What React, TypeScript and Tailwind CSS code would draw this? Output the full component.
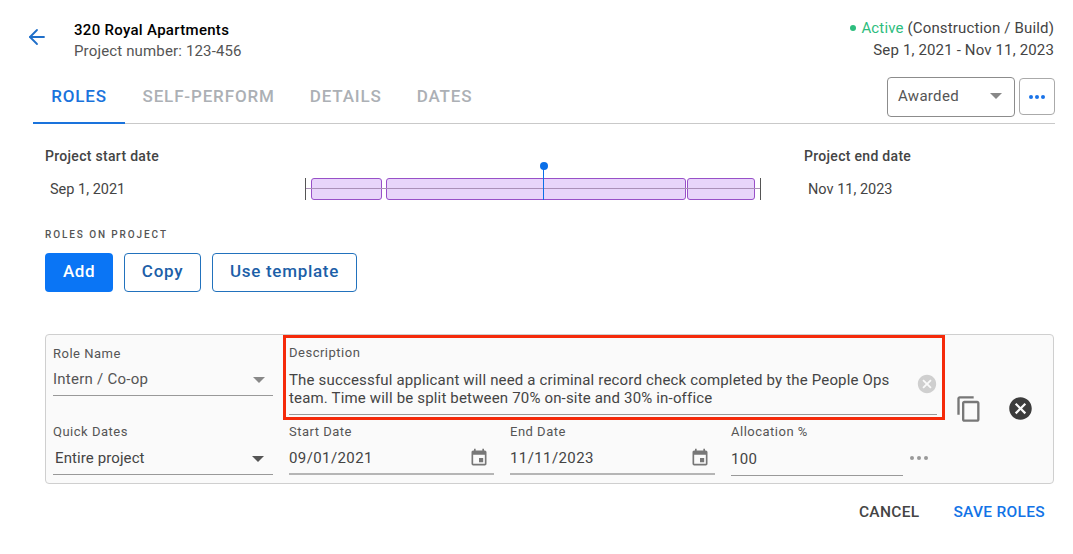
import { ArrowLeft } from 'lucide-react';
import { MdCancel, MdContentCopy, MdEvent } from 'react-icons/md';

function Caret({ className }: { className: string }) {
  return (
    <svg width="12" height="6" viewBox="0 0 14 7" className={className}>
      <path d="M0 0h14L7 7z" fill="currentColor" />
    </svg>
  );
}

function Label({ children }: { children: string }) {
  return <div className="text-[13px] leading-[16px] tracking-[0.5px] text-[#555]">{children}</div>;
}

function DateField({ label, value, width }: { label: string; value: string; width: string }) {
  return (
    <div className={width}>
      <Label>{label}</Label>
      <div className="mt-[8px] h-[27px] border-b-2 border-[#b5b5b5] flex items-start justify-between pr-[5px]">
        <span className="text-[15px] leading-[20px] tracking-[0.4px] text-[#444]">{value}</span>
        <MdEvent className="w-[20px] h-[20px] text-[#777]" />
      </div>
    </div>
  );
}

export default function App() {
  const tabs = ['SELF-PERFORM', 'DETAILS', 'DATES'];

  return (
    <div className="w-[1073px] h-[554px] bg-white overflow-hidden font-['Roboto',sans-serif] text-[#444]">
      {/* Header */}
      <div className="h-[78px] pl-[25px] pr-[19px] pt-[20px] flex justify-between">
        <div className="flex">
          <ArrowLeft className="w-[24px] h-[24px] mt-[5px] text-[#1f6fc9]" strokeWidth={1.8} />
          <div className="ml-[25px]">
            <div className="text-[15px] leading-[20px] font-medium tracking-[0.3px] text-black">320 Royal Apartments</div>
            <div className="mt-[1px] text-[15px] leading-[20px] tracking-[0.15px] text-[#555]">Project number: 123-456</div>
          </div>
        </div>
        <div className="text-right text-[15px] leading-[22px] tracking-[0.15px] text-[#444]">
          <div className="-mt-[3px]">
            <span className="inline-block w-[6px] h-[6px] rounded-full bg-[#2dbd7e] mr-[5px] mb-[2px]" />
            <span className="text-[#2dbd7e]">Active</span> (Construction / Build)
          </div>
          <div>Sep 1, 2021 - Nov 11, 2023</div>
        </div>
      </div>

      {/* Tabs */}
      <div className="ml-[33px] mr-[18px] h-[46px] border-b border-[#c9c9c9] flex justify-between">
        <div className="flex">
          <div className="h-[46px] w-[92px] border-b-2 border-[#1a73dc] pt-[8px] text-center text-[17px] leading-[20px] font-medium tracking-[0.85px] text-[#1a73dc]">
            ROLES
          </div>
          {tabs.map((tab) => (
            <div key={tab} className="h-[45px] px-[17.5px] first-of-type:pl-[18px] pt-[8px] text-[17px] leading-[20px] font-medium tracking-[0.85px] text-[#acb0b5]">
              {tab}
            </div>
          ))}
        </div>
        <div className="flex gap-[4px] -mt-[1px]">
          <div className="w-[128px] h-[40px] border border-[#8c8c8c] rounded-[4px] pl-[10px] pr-[12px] pb-[2px] flex items-center justify-between text-[15px] tracking-[0.3px] text-[#555]">
            Awarded
            <Caret className="text-[#888]" />
          </div>
          <div className="w-[36px] h-[37px] mt-[1px] border border-[#aaa] rounded-[4px] flex items-center justify-center gap-[2px]">
            <span className="w-[4px] h-[4px] rounded-full bg-[#1a73e8]" />
            <span className="w-[4px] h-[4px] rounded-full bg-[#1a73e8]" />
            <span className="w-[4px] h-[4px] rounded-full bg-[#1a73e8]" />
          </div>
        </div>
      </div>

      {/* Timeline */}
      <div className="ml-[45px] mt-[23px] h-[54px] flex">
        <div className="w-[260px]">
          <div className="text-[14px] leading-[18px] font-medium tracking-[0.3px] text-[#444]">Project start date</div>
          <div className="mt-[16px] ml-[5px] text-[14.5px] leading-[18px] text-[#444]">Sep 1, 2021</div>
        </div>
        <div className="relative w-[456px] h-[54px]">
          <div className="mt-[31px] h-[22px] flex items-stretch">
            <div className="w-px bg-[#555]" />
            <div className="ml-[5px] w-[71px] bg-[#e8d5fa] border border-[#9850c8] rounded-[3px]" />
            <div className="ml-[4px] w-[300px] bg-[#e8d5fa] border border-[#9850c8] rounded-[3px]" />
            <div className="ml-[1px] w-[68px] bg-[#e8d5fa] border border-[#9850c8] rounded-[3px]" />
            <div className="ml-[5px] w-px bg-[#555]" />
          </div>
          <div className="absolute left-[1px] top-[41px] w-[454px] h-px bg-[#aa90b8]" />
          <div className="absolute left-[238px] top-[16px] w-px h-[37px] bg-[#0a6fe8]" />
          <div className="absolute left-[235px] top-[15px] w-[8px] h-[8px] rounded-full bg-[#0a6fe8]" />
        </div>
        <div className="ml-[43px]">
          <div className="text-[14px] leading-[18px] font-medium tracking-[0.3px] text-[#444]">Project end date</div>
          <div className="mt-[16px] ml-[4px] text-[14.5px] leading-[18px] text-[#444]">Nov 11, 2023</div>
        </div>
      </div>

      {/* Roles on project */}
      <div className="ml-[45px] mt-[27px] text-[10px] leading-[14px] font-medium tracking-[1.9px] text-[#555]">ROLES ON PROJECT</div>
      <div className="ml-[45px] mt-[11px] flex gap-[11px]">
        <button className="w-[68px] h-[39px] pb-[2px] rounded-[4px] bg-[#0a75f5] text-[17px] font-medium tracking-[0.5px] text-white">Add</button>
        <button className="w-[77px] h-[39px] pb-[2px] rounded-[4px] border border-[#2272bd] bg-white text-[17px] tracking-[0.7px] font-medium text-[#1d5fa8]">Copy</button>
        <button className="w-[145px] h-[39px] pb-[2px] rounded-[4px] border border-[#2272bd] bg-white text-[17px] tracking-[0.7px] font-medium text-[#1d5fa8]">Use template</button>
      </div>

      {/* Role card */}
      <div className="ml-[45px] mt-[42px] w-[1009px] h-[150px] border border-[#cfcfcf] rounded-[4px] bg-[#fafafa]">
        <div className="flex pl-[7px]">
          <div className="w-[220px] shrink-0 pt-[11px]">
            <Label>Role Name</Label>
            <div className="mt-[7px] h-[27px] border-b border-[#999] flex items-start justify-between pr-[8px]">
              <span className="text-[15px] leading-[20px] tracking-[0.25px] text-[#555]">Intern / Co-op</span>
              <Caret className="mt-[8px] text-[#888]" />
            </div>
          </div>
          <div className="ml-[10px] w-[662px] shrink-0 h-[85px] border-[3px] border-[#f52a0a] pl-[3px] pr-[5px] pt-[7px]">
            <Label>Description</Label>
            <div className="mt-[10px] h-[44px] border-b border-[#999] relative">
              <div className="text-[15px] leading-[18px] tracking-[0.17px] text-[#444]">
                The successful applicant will need a criminal record check completed by the People Ops
                <br />
                team. Time will be split between 70% on-site and 30% in-office
              </div>
              <MdCancel className="absolute right-[-1px] top-[2px] w-[22px] h-[22px] text-[#cfcfcf]" />
            </div>
          </div>
          <MdContentCopy className="ml-[10px] mt-[60px] w-[28px] h-[28px] shrink-0 text-[#777]" />
          <MdCancel className="ml-[24px] mt-[60px] w-[27px] h-[27px] shrink-0 text-[#3c3c3c]" />
        </div>
        <div className="flex pl-[7px] pt-[1px]">
          <div className="w-[220px]">
            <Label>Quick Dates</Label>
            <div className="mt-[8px] h-[27px] border-b border-[#999] flex items-start justify-between pl-[2px] pr-[9px]">
              <span className="text-[15px] leading-[20px] tracking-[0.1px] text-[#444]">Entire project</span>
              <Caret className="mt-[8px] text-[#555]" />
            </div>
          </div>
          <div className="ml-[16px]">
            <DateField label="Start Date" value="09/01/2021" width="w-[205px]" />
          </div>
          <div className="ml-[16px]">
            <DateField label="End Date" value="11/11/2023" width="w-[205px]" />
          </div>
          <div className="ml-[16px] w-[172px]">
            <Label>Allocation %</Label>
            <div className="mt-[9px] h-[27px] border-b border-[#999] text-[15px] leading-[21px] tracking-[0.3px] text-[#444]">100</div>
          </div>
          <div className="ml-[7px] mt-[32px] h-[4px] flex gap-[3px]">
            <span className="w-[4px] h-[4px] rounded-full bg-[#999]" />
            <span className="w-[4px] h-[4px] rounded-full bg-[#999]" />
            <span className="w-[4px] h-[4px] rounded-full bg-[#999]" />
          </div>
        </div>
      </div>

      {/* Footer actions */}
      <div className="mt-[18px] pr-[28px] flex justify-end gap-[34px] text-[15.5px] leading-[20px] font-medium tracking-[0.3px]">
        <span className="text-[#444]">CANCEL</span>
        <span className="text-[#1273e6]">SAVE ROLES</span>
      </div>
    </div>
  );
}
